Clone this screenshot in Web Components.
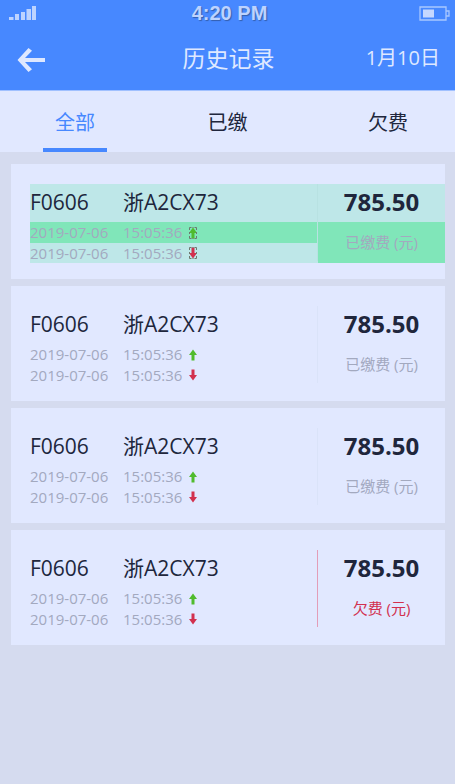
<!DOCTYPE html>
<html lang="zh-CN">
<head>
<meta charset="utf-8">
<meta name="viewport" content="width=device-width, initial-scale=1">
<title>历史记录</title>
<style>
body { margin: 0; background: #d5dbef; color: #20263c; font-family: "Open Sans", "Noto Sans CJK SC", sans-serif; }
</style>
</head>
<body>
<history-app></history-app>

<template id="t-status">
  <style>
    :host { display: grid; grid-template-columns: 1fr auto 1fr; align-items: center; height: 26px; padding: 0 5px 0 9px; color: #bdd3ff; }
    svg { display: block; }
    .battery { justify-self: end; }
    time { font: bold 20px/26px "Liberation Sans", sans-serif; text-shadow: 1px 1px 1px #345fae; }
  </style>
  <svg width="28" height="14" viewBox="0 0 28 14" fill="currentColor" aria-hidden="true"><path d="M0 11h4.500v3H0zM6 8h4v6H6zM12 6h4v8h-4zM17.500 3h4.500v11h-4.500zM23 0h4v14h-4z"/></svg>
  <time>4:20 PM</time>
  <svg class="battery" width="31" height="15" viewBox="0 0 31 15" aria-hidden="true"><path d="M1 1h26v13H1zM27 5h3v5h-3" fill="none" stroke="#a9c7ff" stroke-width="1.3"/><path d="M4 3.500h11v8H4z" fill="#c6d8ff"/></svg>
</template>

<template id="t-nav">
  <style>
    :host { display: grid; grid-template-columns: 1fr auto 1fr; align-items: center; height: 64px; padding: 0 15px 0 17px; color: #dfe8ff; }
    button { font: inherit; color: inherit; background: none; border: 0; padding: 0; cursor: pointer; }
    .back { justify-self: start; padding-top: 4px; }
    .date { justify-self: end; font-size: 20px; line-height: 28px; }
    h1 { margin: 0; font-size: 23px; line-height: 32px; font-weight: 400; }
    svg { display: block; }
  </style>
  <button class="back" aria-label="返回"><svg width="30" height="26" viewBox="0 0 30 26"><path d="M0.500 13L11.500 1L15 3.800L8 11H28V15H8L15 22.200L11.500 25Z" fill="currentColor"/></svg></button>
  <h1><slot></slot></h1>
  <button class="date"><slot name="date"></slot></button>
</template>

<template id="t-tabs">
  <style>
    :host { display: grid; grid-template-columns: 33% 34% 33%; height: 61px; background: #e1e8ff; border-top: 1px solid #a0c0ff; }
    ::slotted(tab-item:last-child) { padding-left: 16px; }
  </style>
  <slot></slot>
</template>

<template id="t-tab">
  <style>
    :host { display: flex; justify-content: center; }
    button { box-sizing: border-box; width: 64px; padding: 4px 0 0; border: 0; border-bottom: 4px solid transparent; background: none; font: inherit; font-size: 20px; color: #20263c; cursor: pointer; }
    :host([active]) button { color: #4788ff; border-color: #4788ff; }
  </style>
  <button role="tab"><slot></slot></button>
</template>

<template id="t-record">
  <style>
    :host { display: block; background: #e1e8ff; padding: 20px 0 16px 19px; --rule: #dae3f9; --note: #a3a9bf; }
    :host([owed]) { --rule: #e39db8; --note: #d2304e; }
    :host([selected]) { --soft: #bee7e8; --strong: #80e6b9; --rule: #b8e2e2; }
    article { display: grid; grid-template-columns: 1fr 1px 127px; background: var(--soft, transparent); }
    .rule { background: var(--rule); margin-bottom: 2px; }
    .head { display: grid; grid-template-columns: 93px 1fr; font-size: 21px; line-height: 36px; padding-bottom: 2px; }
    .row { display: grid; grid-template-columns: 93px auto 1fr; align-items: center; font-size: 15px; line-height: 20px; height: 21px; color: #a3a9bf; }
    .row.in { background: var(--strong, transparent); line-height: 21px; }
    .row.out { height: 20px; }
    .row svg { display: block; margin-left: 7px; }
    .pay { display: flex; flex-direction: column; text-align: center; }
    .amount { font-size: 24px; line-height: 36px; font-weight: 700; padding-bottom: 2px; }
    .note { font-size: 15px; line-height: 41px; color: var(--note); background: var(--strong, transparent); }
    .mark { display: none; }
    :host([selected]) .mark { display: inline; }
  </style>
  <article>
    <div>
      <div class="head"><span><slot name="bay"></slot></span><span><slot name="plate"></slot></span></div>
      <div class="row in"><time><slot name="in-date"></slot></time><time><slot name="in-time"></slot></time>
        <svg width="8" height="12" viewBox="0 0 8 12" role="img" aria-label="进"><path d="M4 .5L8 6H5.500V11.500H2.500V6H0z" fill="#50bb2d"/><path class="mark" d="M.5 3V.5H2.500M3.500 .5h1M5.500 .5h2V3M7.500 5v2M7.500 9v2.500h-2M4.500 11.500h-1M2.500 11.500h-2V9M.5 7V5" fill="none" stroke="#6f786f"/></svg></div>
      <div class="row out"><time><slot name="out-date"></slot></time><time><slot name="out-time"></slot></time>
        <svg width="8" height="12" viewBox="0 0 8 12" role="img" aria-label="出"><path d="M4 11.500L8 6H5.500V.5H2.500V6H0z" fill="#d2304e"/><path class="mark" d="M.5 3V.5H2.500M3.500 .5h1M5.500 .5h2V3M7.500 5v2M7.500 9v2.500h-2M4.500 11.500h-1M2.500 11.500h-2V9M.5 7V5" fill="none" stroke="#6f786f"/></svg></div>
    </div>
    <div class="rule"></div>
    <div class="pay"><span class="amount"><slot name="amount"></slot></span><span class="note"><slot name="note"></slot></span></div>
  </article>
</template>

<template id="t-app">
  <style>
    :host { display: block; }
    header { background: #4788ff; }
    main { display: flex; flex-direction: column; gap: 7px; padding: 12px 10px 12px 11px; }
  </style>
  <header>
    <status-bar></status-bar>
    <nav-bar>历史记录<span slot="date">1月10日</span></nav-bar>
  </header>
  <tab-list role="tablist"><tab-item active>全部</tab-item><tab-item>已缴</tab-item><tab-item>欠费</tab-item></tab-list>
  <main></main>
</template>

<script>
const define = (name, id) => customElements.define(name, class extends HTMLElement {
  constructor() {
    super();
    this.attachShadow({ mode: "open" }).append(document.getElementById(id).content.cloneNode(true));
  }
});
define("status-bar", "t-status");
define("nav-bar", "t-nav");
define("tab-list", "t-tabs");
define("record-card", "t-record");

customElements.define("tab-item", class extends HTMLElement {
  constructor() {
    super();
    this.attachShadow({ mode: "open" }).append(document.getElementById("t-tab").content.cloneNode(true));
    this.addEventListener("click", () => {
      for (const tab of this.parentElement.children) tab.toggleAttribute("active", tab === this);
    });
  }
});

const visit = { bay: "F0606", plate: "浙A2CX73", "in-date": "2019-07-06", "in-time": "15:05:36", "out-date": "2019-07-06", "out-time": "15:05:36", amount: "785.50" };
const records = [
  { ...visit, note: "已缴费 (元)", state: "selected" },
  { ...visit, note: "已缴费 (元)" },
  { ...visit, note: "已缴费 (元)" },
  { ...visit, note: "欠费 (元)", state: "owed" }
];

customElements.define("history-app", class extends HTMLElement {
  constructor() {
    super();
    const root = this.attachShadow({ mode: "open" });
    root.append(document.getElementById("t-app").content.cloneNode(true));
    const main = root.querySelector("main");
    for (const { state, ...fields } of records) {
      const card = document.createElement("record-card");
      if (state) card.setAttribute(state, "");
      for (const [slot, text] of Object.entries(fields)) {
        const span = document.createElement("span");
        span.slot = slot;
        span.textContent = text;
        card.append(span);
      }
      main.append(card);
    }
  }
});
</script>
</body>
</html>
